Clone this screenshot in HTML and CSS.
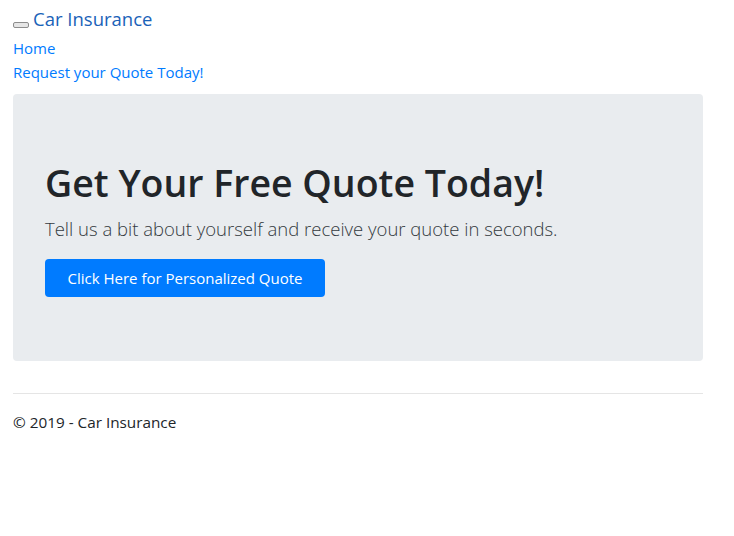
FILE: index.html
```html
<!DOCTYPE html>
<html lang="en">
<head>
<meta charset="utf-8">
<title>Car Insurance</title>
<link rel="stylesheet" href="styles.css">
</head>
<body>
<header class="site-header">
  <div class="brand-row">
    <button class="toggler" type="button" aria-label="Toggle navigation"></button><a class="brand" href="#">Car Insurance</a>
  </div>
  <ul class="nav">
    <li><a href="#">Home</a></li>
    <li><a href="#">Request your Quote Today!</a></li>
  </ul>
</header>
<main class="content">
  <section class="jumbotron">
    <h1 class="display">Get Your Free Quote Today!</h1>
    <p class="lead">Tell us a bit about yourself and receive your quote in seconds.</p>
    <a class="btn-primary" href="#">Click Here for Personalized Quote</a>
  </section>
  <hr class="rule">
  <footer class="footer">
    <p>&copy; 2019 - Car Insurance</p>
  </footer>
</main>
</body>
</html>
```
FILE: styles.css
```css
html, body {
  margin: 0;
  padding: 0;
  background: #fff;
}
body {
  font-family: "Open Sans", "Noto Sans", sans-serif;
  font-size: 15px;
  line-height: 24px;
  color: #212529;
}
a {
  text-decoration: none;
}
.site-header {
  padding: 4px 13px 10px;
}
.brand-row {
  height: 30px;
  display: flex;
  align-items: center;
}
.toggler {
  width: 16px;
  height: 6px;
  padding: 0;
  margin: 11px 4px 0 0;
  background: #e6e6e6;
  border: 1px solid #8d8d8d;
  border-radius: 2px;
}
.brand {
  font-size: 18.5px;
  line-height: 30px;
  color: #1a62b8;
}
.nav {
  list-style: none;
  margin: 2px 0 0;
  padding: 0;
}
.nav a {
  color: #007bff;
  font-size: 15px;
  line-height: 24px;
}
.content {
  padding: 0 31px 0 13px;
}
.jumbotron {
  background: #e9ecef;
  border-radius: 4px;
  padding: 63px 32px 64px;
  margin: 0 0 32px;
}
.display {
  margin: 0 0 5px;
  font-size: 37.5px;
  line-height: 52px;
  font-weight: 600;
  color: #212529;
}
.lead {
  margin: 0 0 15px;
  font-size: 18.5px;
  line-height: 30px;
  font-weight: 300;
  color: #343a40;
}
.btn-primary {
  display: flex;
  align-items: center;
  justify-content: center;
  width: 280px;
  height: 38px;
  box-sizing: border-box;
  background: #007bff;
  color: #fff;
  font-size: 15px;
  border-radius: 4px;
}
.rule {
  margin: 0;
  border: 0;
  border-top: 1px solid #e5e5e5;
}
.footer p {
  margin: 16px 0;
  font-size: 15.3px;
  line-height: 24px;
}
```
